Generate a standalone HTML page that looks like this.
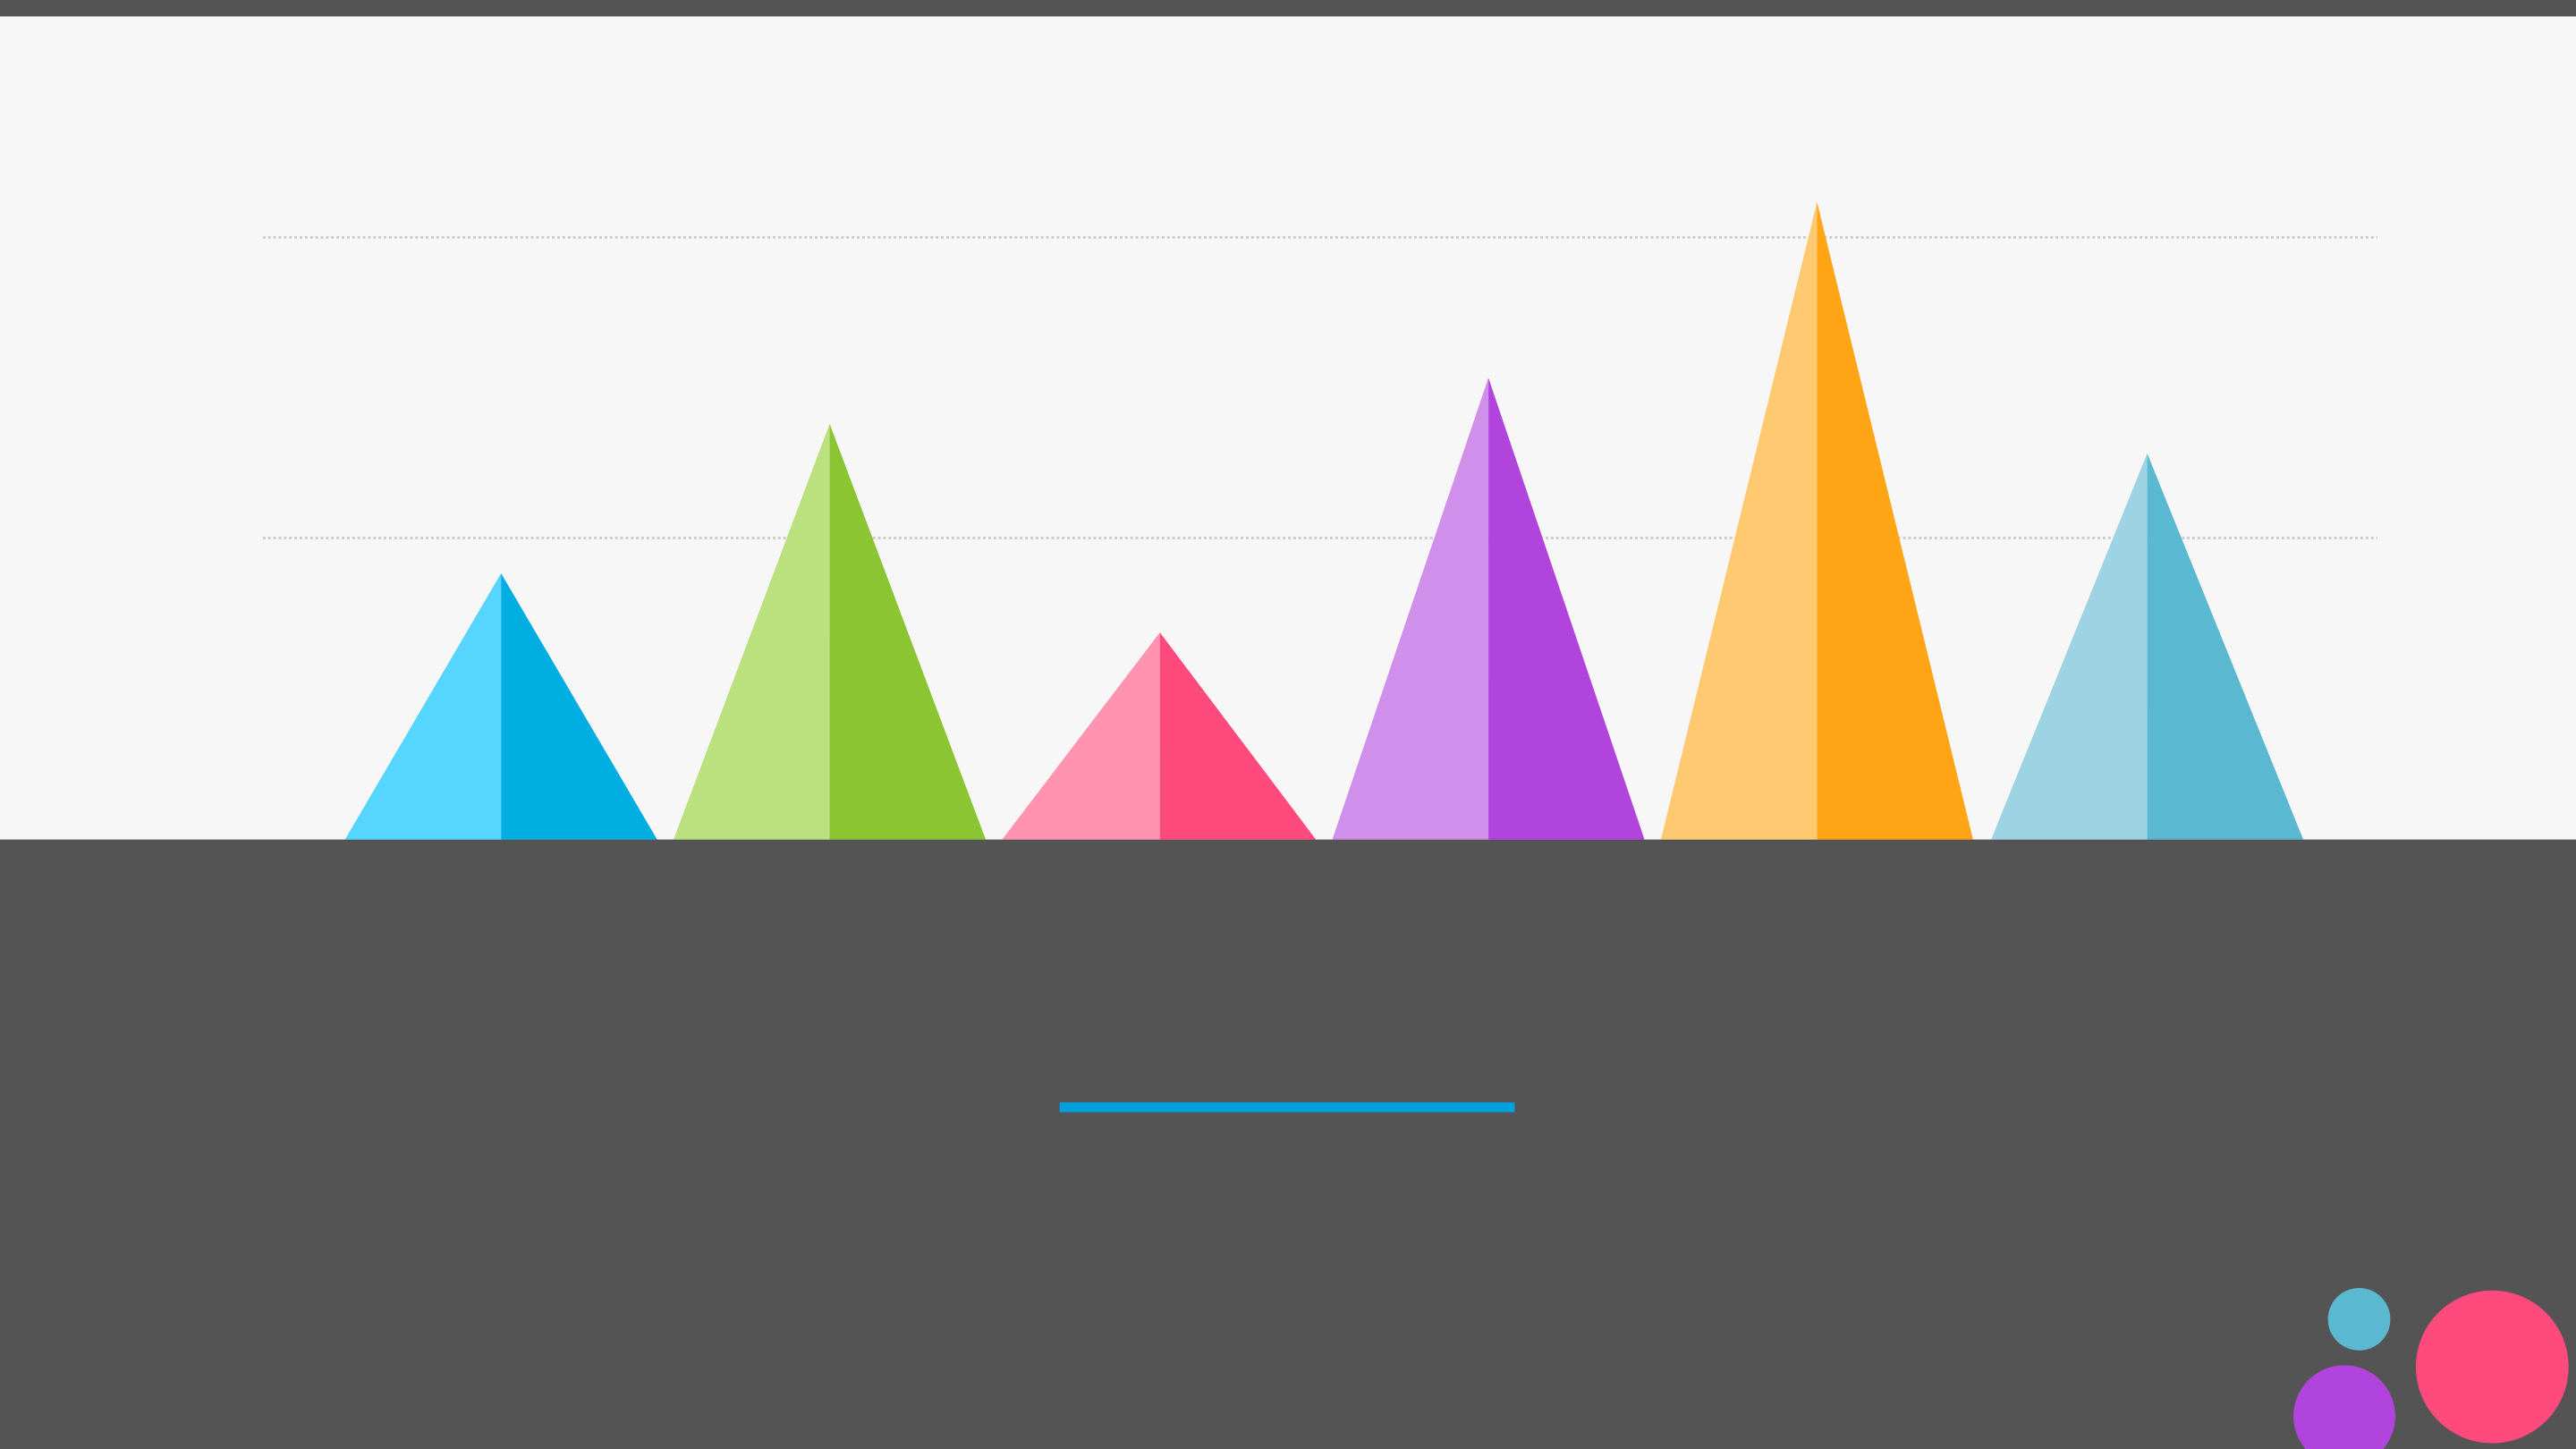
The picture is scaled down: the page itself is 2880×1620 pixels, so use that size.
<!DOCTYPE html>
<html><head><meta charset="utf-8"><style>html,body{margin:0;padding:0;width:2880px;height:1620px;overflow:hidden;background:#545454}svg{display:block}</style></head>
<body>
<svg width="2880" height="1620" viewBox="0 0 1568 882" preserveAspectRatio="none" xmlns="http://www.w3.org/2000/svg">
<rect x="0" y="0" width="1568" height="882" fill="#545454"/>
<rect x="0" y="10" width="1568" height="501" fill="#f7f7f7"/>
<line x1="160" y1="144.5" x2="1447" y2="144.5" stroke="#cccccc" stroke-width="1.6" stroke-dasharray="1.6 1.6"/>
<line x1="160" y1="327.5" x2="1447" y2="327.5" stroke="#cccccc" stroke-width="1.6" stroke-dasharray="1.6 1.6"/>
<polygon points="210,511 305,349 305,511" fill="#56d5fe"/><polygon points="305,349 400,511 305,511" fill="#00aee1"/>
<polygon points="410,511 505,258 505,511" fill="#bbe07e"/><polygon points="505,258 600,511 505,511" fill="#8bc531"/>
<polygon points="610,511 706,385 706,511" fill="#ff93b0"/><polygon points="706,385 801,511 706,511" fill="#ff4a7d"/>
<polygon points="811,511 906,230 906,511" fill="#d08fea"/><polygon points="906,230 1001,511 906,511" fill="#b044dc"/>
<polygon points="1011,511 1106,123 1106,511" fill="#ffc972"/><polygon points="1106,123 1201,511 1106,511" fill="#ffa516"/>
<polygon points="1212,511 1307,276 1307,511" fill="#9dd3e2"/><polygon points="1307,276 1402,511 1307,511" fill="#5bb8d1"/>
<rect x="645" y="671" width="277" height="6" fill="#00a0dc"/>
<circle cx="1436" cy="803" r="19" fill="#5bb8d1"/>
<circle cx="1517" cy="832" r="46.5" fill="#ff4a7d"/>
<circle cx="1427" cy="862" r="31" fill="#b044dc"/>
</svg>
</body></html>
